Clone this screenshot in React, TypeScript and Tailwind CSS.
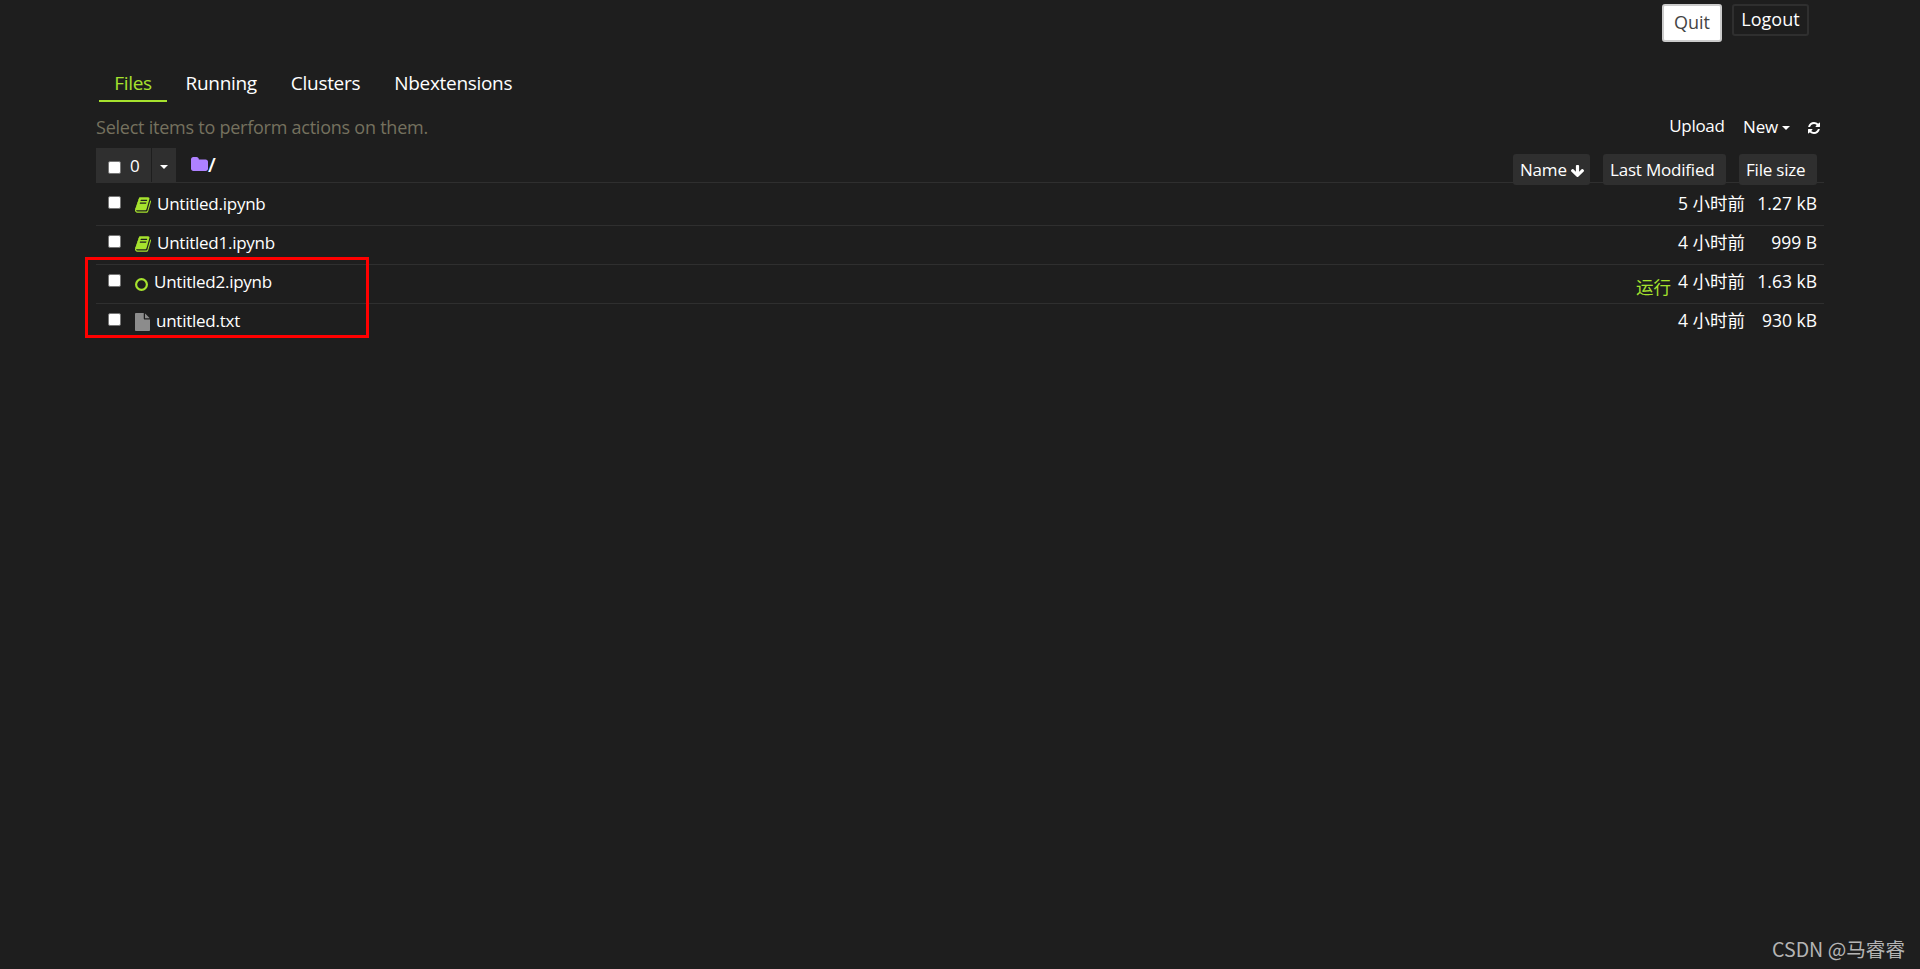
import React from 'react';

// FontAwesome 4 glyph outlines
const ICONS = {
  book: 'M1639 478q40 57 18 129l-275 906q-19 64-76.5 107.5t-122.5 43.5h-923q-77 0-148.5-53.5t-99.5-131.5q-24-67-2-127 0-4 3-27t4-37q1-8-3-21.5t-3-19.5q2-11 8-21t16.5-23.5 16.5-23.5q23-38 45-91.5t30-91.5q3-10 .5-30t-.5-28q3-11 17-28t17-23q21-36 42-92t25-90q1-9-2.5-32t.5-28q4-13 22-30.5t22-22.5q19-26 42.5-84.5t27.5-96.5q1-8-3-25.5t-2-26.5q2-8 9-18t18-23 17-21q8-12 16.5-30.5t15-35 16-36 19.5-32 26.5-23.5 36-11.5 47.5 5.5l-1 3q38-9 51-9h761q74 0 114 56t18 130l-274 906q-36 119-71.5 153.5t-128.5 34.5h-869q-27 0-38 15-11 16-1 43 24 70 144 70h923q29 0 56-15.5t35-41.5l300-987q7-22 5-57 38 15 59 43zm-1064 2q-4 13 2 22.5t20 9.5h608q13 0 25.5-9.5t16.5-22.5l21-64q4-13-2-22.5t-20-9.5h-608q-13 0-25.5 9.5t-16.5 22.5zm-83 256q-4 13 2 22.5t20 9.5h608q13 0 25.5-9.5t16.5-22.5l21-64q4-13-2-22.5t-20-9.5h-608q-13 0-25.5 9.5t-16.5 22.5z',
  refresh: 'M1639 1056q0 5-1 7-64 268-268 434.5t-478 166.5q-146 0-282.5-55t-243.5-157l-129 129q-19 19-45 19t-45-19-19-45v-448q0-26 19-45t45-19h448q26 0 45 19t19 45-19 45l-137 137q71 66 161 102t187 36q134 0 250-65t186-179q11-17 53-117 8-23 30-23h192q13 0 22.5 9.5t9.5 22.5zm25-800v448q0 26-19 45t-45 19h-448q-26 0-45-19t-19-45 19-45l138-138q-148-137-349-137-134 0-250 65t-186 179q-11 17-53 117-8 23-30 23h-199q-13 0-22.5-9.5t-9.5-22.5v-7q65-268 270-434.5t480-166.5q146 0 284 55.5t245 156.5l130-129q19-19 45-19t45 19 19 45z',
  arrowDown: 'M1675 832q0 53-37 90l-651 652q-39 37-91 37-53 0-90-37l-651-652q-38-36-38-90 0-53 38-91l74-75q39-37 91-37 53 0 90 37l294 294v-704q0-52 38-90t90-38h128q52 0 90 38t38 90v704l294-294q37-37 90-37 52 0 91 37l75 75q37 39 37 91z',
  folder: 'M1664 608v704q0 92-66 158t-158 66h-1216q-92 0-158-66t-66-158v-960q0-92 66-158t158-66h320q92 0 158 66t66 158v32h672q92 0 158 66t66 158z',
  file: 'M1152 512v-472q22 14 36 28l408 408q14 14 28 36h-472zm-128 32q0 40 28 68t68 28h544v1056q0 40-28 68t-68 28h-1344q-40 0-68-28t-28-68v-1600q0-40 28-68t68-28h800v544z',
};

interface FileItem {
  name: string;
  kind: 'notebook' | 'running' | 'file';
  modified: string;
  size: string;
}

const FILES: FileItem[] = [
  { name: 'Untitled.ipynb', kind: 'notebook', modified: '5 小时前', size: '1.27 kB' },
  { name: 'Untitled1.ipynb', kind: 'notebook', modified: '4 小时前', size: '999 B' },
  { name: 'Untitled2.ipynb', kind: 'running', modified: '4 小时前', size: '1.63 kB' },
  { name: 'untitled.txt', kind: 'file', modified: '4 小时前', size: '930 kB' },
];

const Checkbox = ({ className }: { className: string }) => (
  <span className={`block h-[13px] w-[13px] shrink-0 rounded-[2px] border border-[#767676] bg-white ${className}`} />
);

const Caret = ({ className }: { className: string }) => (
  <svg className={className} width="8" height="4" viewBox="0 0 8 4">
    <path d="M0 0h8L4 4z" fill="currentColor" />
  </svg>
);

const FileIcon = ({ kind }: { kind: FileItem['kind'] }) => {
  if (kind === 'notebook') {
    return (
      <svg className="mt-[10px] shrink-0 text-[#a6e22e]" width="16" height="16" viewBox="0 110 1664 1570" preserveAspectRatio="none">
        <path d={ICONS.book} fill="currentColor" />
      </svg>
    );
  }
  if (kind === 'running') {
    return (
      <svg className="mt-[13px] shrink-0 text-[#a6e22e]" width="13" height="13" viewBox="0 0 13 13">
        <circle cx="6.5" cy="6.5" r="5.4" fill="none" stroke="currentColor" strokeWidth="2.2" />
      </svg>
    );
  }
  return (
    <svg className="mt-[9px] shrink-0 text-[#8c8c8c]" width="15" height="18" viewBox="128 0 1536 1792" preserveAspectRatio="none">
      <path d={ICONS.file} fill="currentColor" />
    </svg>
  );
};

const FileRow = ({ item, last }: { item: FileItem; last: boolean }) => (
  <div className={`flex h-[39px] items-start border-b pl-3 pr-[7px] text-[17.5px] leading-[24px] ${last ? 'border-transparent' : 'border-[#2f2f2f]'}`}>
    <Checkbox className="mt-[9px] mr-[14px]" />
    <FileIcon kind={item.kind} />
    <span className="mt-[5px] ml-[6px] text-[17px] tracking-[-0.25px]">{item.name}</span>
    <span className="grow" />
    {item.kind === 'running' && (
      <span className="mt-[10px] mr-[7px] text-[#a6e22e]">运行</span>
    )}
    <span className="mt-1">{item.modified}</span>
    <span className="mt-1 w-[72px] text-right">{item.size}</span>
  </div>
);

const Header = () => (
  <header className="flex h-[60px] items-start justify-end pt-1 pr-[15px]">
    <button className="mr-[10px] h-[38px] w-[60px] rounded-[3px] border-2 border-[#cccccc] bg-white pb-[2px] text-[18px] text-[#444444]">Quit</button>
    <button className="h-8 w-[77px] rounded-[3px] border-2 border-[#2f2f2f] pb-[2px] text-[18px] leading-[24px] text-white">Logout</button>
  </header>
);

const Tabs = () => (
  <nav className="flex h-[42px] pl-[3px] text-[19px] leading-[46px] tracking-[-0.3px]">
    <a className="w-[68px] border-b-2 border-[#a6e22e] text-center text-[#a6e22e]">Files</a>
    <a className="ml-[18.5px]">Running</a>
    <a className="ml-[34px]">Clusters</a>
    <a className="ml-[34px]">Nbextensions</a>
  </nav>
);

const Toolbar = () => (
  <div>
    <div className="flex h-[46px] items-start">
      <span className="mt-[12px] text-[18px] leading-[27px] tracking-[-0.24px] text-[#75715e]">Select items to perform actions on them.</span>
      <span className="grow" />
      <span className="mt-[12px] text-[17px] leading-[24px] tracking-[-0.3px]">Upload</span>
      <span className="mt-[13px] ml-[18.5px] text-[17px] leading-[24px] tracking-[-0.2px]">New</span>
      <Caret className="mt-[24px] ml-1" />
      <svg className="mt-[20px] mr-[4px] ml-[18px]" width="12" height="12" viewBox="128 128 1536 1536">
        <path d={ICONS.refresh} fill="currentColor" />
      </svg>
    </div>
    <div className="flex h-[35px] items-start border-b border-[#2f2f2f] text-[17px]">
      <div className="flex h-[34px] w-[55px] bg-[#2f2f2f] pl-3">
        <Checkbox className="mt-[13px] mr-[9px]" />
        <span className="leading-[36px]">0</span>
      </div>
      <div className="ml-px flex h-[34px] w-6 justify-center bg-[#2f2f2f]">
        <Caret className="mt-[17px]" />
      </div>
      <svg className="mt-[9px] ml-[15px] text-[#ae81ff]" width="17" height="14" viewBox="0 128 1664 1408" preserveAspectRatio="none">
        <path d={ICONS.folder} fill="currentColor" />
      </svg>
      <span className="text-[20px] leading-[33px] font-semibold">/</span>
      <span className="grow" />
      <div className="mt-[6px] flex h-[31px] gap-[13px] pr-[7px] leading-[32px] tracking-[-0.2px]">
        <span className="flex w-[77px] items-start rounded-[3px] bg-[#2f2f2f] pl-[7px]">
          Name
          <svg className="mt-[11px] ml-1" width="13" height="12" viewBox="117 128 1558 1483" preserveAspectRatio="none">
            <path d={ICONS.arrowDown} fill="currentColor" />
          </svg>
        </span>
        <span className="w-[123px] rounded-[3px] bg-[#2f2f2f] pl-[7px]">Last Modified</span>
        <span className="w-[78px] rounded-[3px] bg-[#2f2f2f] pl-[7px]">File size</span>
      </div>
    </div>
  </div>
);

const App = () => (
  <div className="relative h-[969px] w-[1920px] overflow-hidden bg-[#1e1e1e] px-24 font-['Open_Sans','Noto_Sans_CJK_SC',sans-serif] whitespace-nowrap text-white">
    <Header />
    <Tabs />
    <Toolbar />
    <main className="pt-1">
      {FILES.map((item, i) => (
        <FileRow key={item.name} item={item} last={i === FILES.length - 1} />
      ))}
    </main>

    {/* highlight frame over the last two rows */}
    <div className="absolute top-[257px] left-[85px] h-[81px] w-[284px] border-[3px] border-[#ff0000]" />
    <div className="absolute right-[15px] bottom-[7px] font-['Noto_Sans_CJK_SC',sans-serif] text-[19.6px] leading-[26px] text-[#b4b4b4]">CSDN @马睿睿</div>
  </div>
);

export default App;
